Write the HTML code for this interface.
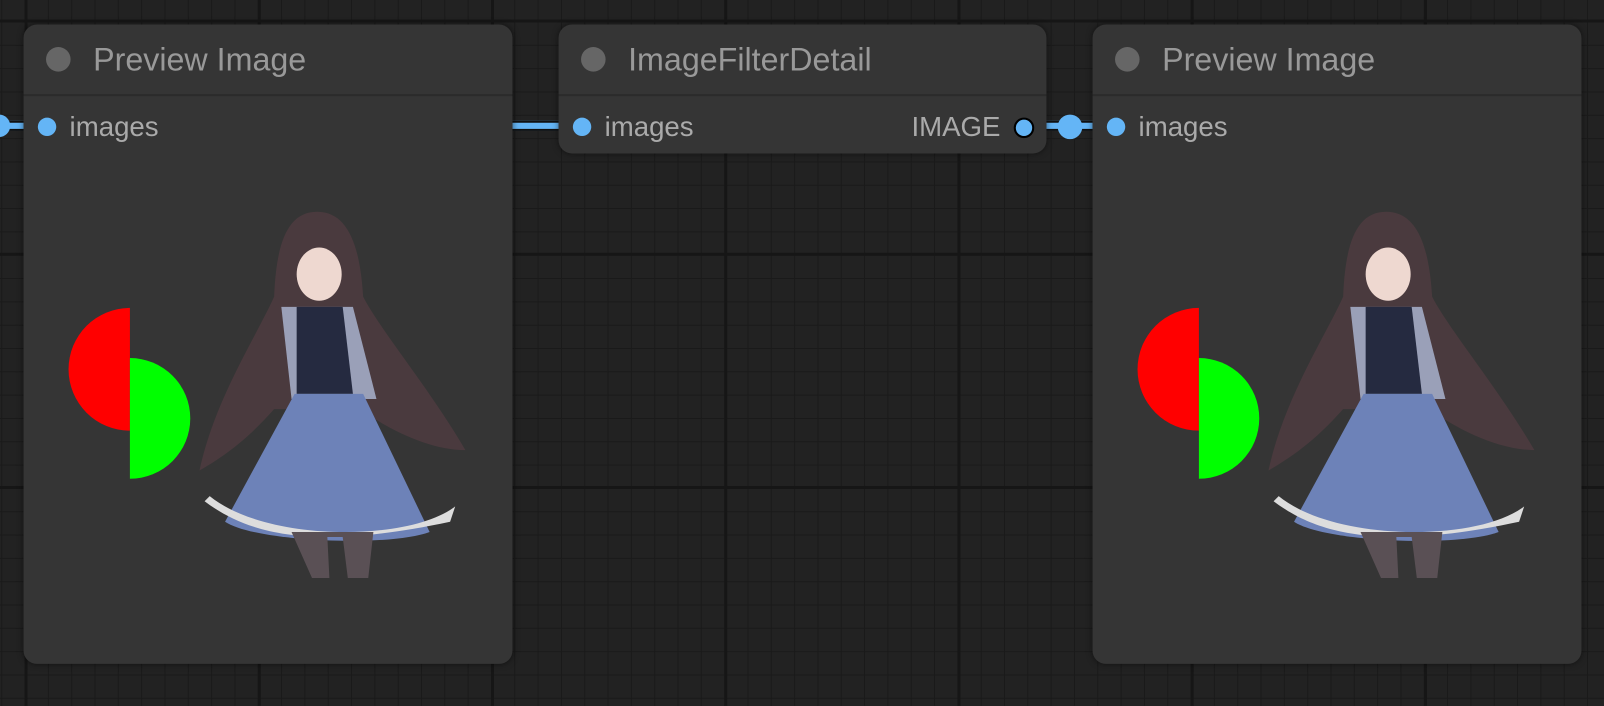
<!DOCTYPE html>
<html><head><style>
html,body{margin:0;width:1604px;height:704px;overflow:hidden;background:#222}
#w{position:absolute;left:0;top:0;width:1568px;height:690px;transform:scale(1.02296);transform-origin:0 0;font-family:"Liberation Sans",sans-serif;
background-color:#222;
background-image:
linear-gradient(90deg,#161616 3px,transparent 3px),
linear-gradient(0deg,#161616 3px,transparent 3px),
linear-gradient(90deg,#1a1a1a 1px,transparent 1px),
linear-gradient(0deg,#1a1a1a 1px,transparent 1px);
background-size:228px 228px,228px 228px,22.8px 22.8px,22.8px 22.8px;
background-position:24px 22px,24px 22px,24px 22px,24px 22px}
.node{position:absolute;background:#353535;border-radius:13px;box-shadow:0 0 6px rgba(0,0,0,.5)}
.title{height:68px;border-bottom:2px solid #2b2b2b;position:relative;color:#999;font-size:31.5px}
.title .dot{position:absolute;left:22px;top:22px;width:24px;height:24px;border-radius:50%;background:#666}
.title span{position:absolute;left:68px;top:16px}
.in{position:absolute;left:14px;top:91px;width:18px;height:18px;border-radius:50%;background:#64b5f6}
.lbl{position:absolute;left:45px;top:85px;color:#aaa;font-size:27px}
.wire{position:absolute;height:6px;background:#64b5f6;border-top:2px solid #111;border-bottom:2px solid #111}
</style></head><body><div id="w">
<div class="wire" style="left:0;top:118px;width:24px"></div>
<div style="position:absolute;left:-12px;top:112px;width:22px;height:22px;border-radius:50%;background:#64b5f6"></div>
<div class="wire" style="left:500px;top:118px;width:48px"></div>
<div class="wire" style="left:1020px;top:118px;width:50px"></div>
<div style="position:absolute;left:1034px;top:112px;width:24px;height:24px;border-radius:50%;background:#64b5f6"></div>

<div class="node" style="left:23px;top:24px;width:478px;height:625px">
<div class="title"><div class="dot"></div><span>Preview Image</span></div>
<div class="in"></div><div class="lbl">images</div>
</div>
<div class="node" style="left:546px;top:24px;width:477px;height:126px">
<div class="title"><div class="dot"></div><span>ImageFilterDetail</span></div>
<div class="in"></div><div class="lbl">images</div>
<div style="position:absolute;right:45px;top:85px;color:#aaa;font-size:27px">IMAGE</div>
<div style="position:absolute;right:12px;top:91px;width:16px;height:16px;border-radius:50%;background:#64b5f6;border:2px solid #000"></div>
</div>
<div class="node" style="left:1068px;top:24px;width:478px;height:625px">
<div class="title"><div class="dot"></div><span>Preview Image</span></div>
<div class="in"></div><div class="lbl">images</div>
</div>

<svg width="1568" height="690" style="position:absolute;left:0;top:0">
<defs>
<g id="pic">
<path d="M127 301 A60 60 0 0 0 127 421 Z" fill="#f00"/>
<path d="M127 350 A59 59 0 0 1 127 468 Z" fill="#0f0"/>
<path d="M310 207 C280 207 270 240 268 290 C250 330 210 390 195 460 C230 440 250 420 268 400 L330 400 L352 400 C380 420 420 440 455 440 C420 380 370 320 355 290 C352 240 340 207 310 207Z" fill="#4a3a3e"/>
<path d="M275 300 L345 300 L368 390 L285 390Z" fill="#9aa0b8"/>
<path d="M290 300 L335 300 L345 385 L290 385Z" fill="#252a40"/>
<path d="M288 385 L355 385 L420 520 C380 535 250 530 220 510Z" fill="#6d82b8"/>
<path d="M200 490 C240 520 300 540 440 510 L445 495 C400 530 260 530 205 485Z" fill="#ddd"/>
<ellipse cx="312" cy="268" rx="22" ry="26" fill="#eed8d0"/>
<path d="M285 520 L305 565 L322 565 L320 525 L335 525 L340 565 L360 565 L365 520Z" fill="#5a5055"/>
</g>
</defs>
<use href="#pic"/>
<use href="#pic" x="1045"/>
</svg>
</div></body></html>
